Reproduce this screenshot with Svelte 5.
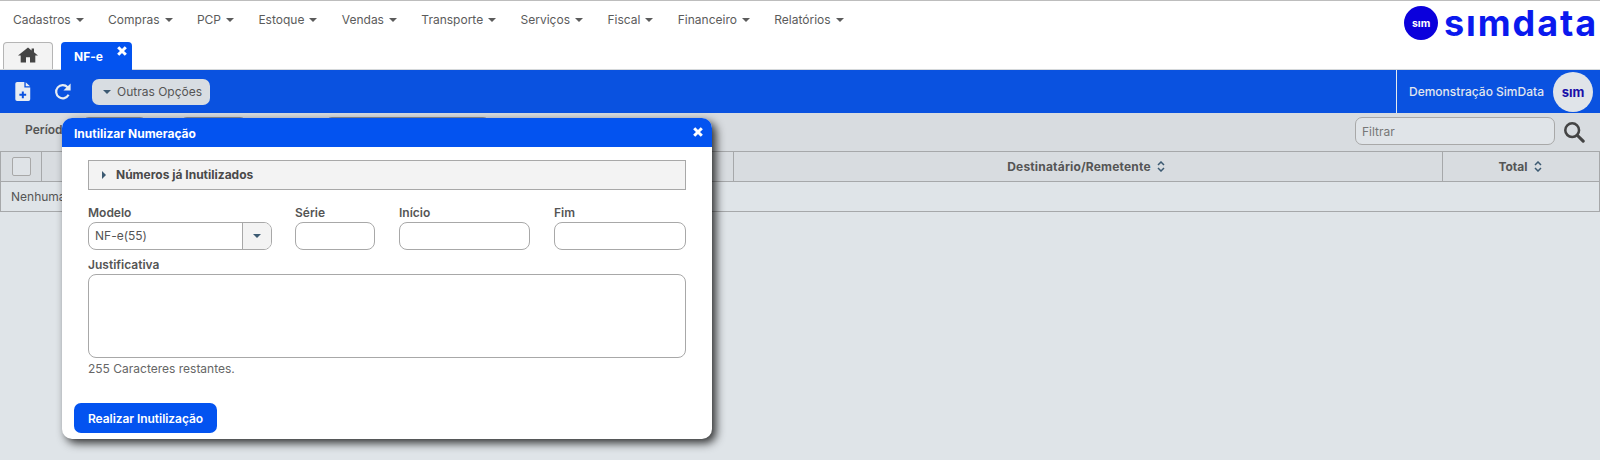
<script>
  const menu = ['Cadastros','Compras','PCP','Estoque','Vendas','Transporte','Serviços','Fiscal','Financeiro','Relatórios'];
</script>

<div class="page">
  <header class="top">
    <nav class="menu">
      {#each menu as m}
        <span class="mi">{m}<i class="caret"></i></span>
      {/each}
    </nav>
    <div class="logo">
      <span class="logo-badge">sım</span>
      <span class="logo-word">sımdata</span>
    </div>
  </header>

  <div class="tabs">
    <div class="tab home">
      <svg width="20" height="16" viewBox="0 0 20 18" preserveAspectRatio="none"><path fill="#444" d="M10 0.5 L13.6 3.8 V1.6 H16 V6 L20 9.6 H17.3 V17.5 H12 V11.5 H8 V17.5 H2.7 V9.6 H0 Z"/></svg>
    </div>
    <div class="tab active">NF-e
      <svg class="tabx" width="10" height="10" viewBox="0 0 10 10"><path stroke="#fff" stroke-width="3" d="M1.2 1.2 L8.8 8.8 M8.8 1.2 L1.2 8.8"/></svg>
    </div>
  </div>

  <div class="bar">
    <button class="ic" aria-label="Novo">
      <svg width="16" height="19" viewBox="0 0 17 21"><path fill="#e8edf3" d="M2 0 H10 V6 H16.5 V19 a2 2 0 0 1-2 2 H2 a2 2 0 0 1-2-2 V2 a2 2 0 0 1 2-2Z M11.5 0.3 L16.3 4.8 H11.5Z"/><path stroke="#0a52e0" stroke-width="2.2" d="M8.3 10.5 V18 M4.5 14.2 H12"/></svg>
    </button>
    <button class="ic ic2" aria-label="Atualizar">
      <svg width="18" height="18" viewBox="0 0 18 18"><path fill="none" stroke="#e8edf3" stroke-width="2.2" d="M14.6 11.8 A6.6 6.6 0 1 1 13.6 4.2"/><path fill="#e8edf3" d="M16.6 0.4 V7.6 H9.4Z"/></svg>
    </button>
    <button class="opts"><i class="caret blue"></i>Outras Opções</button>
    <div class="user">
      <span class="uname">Demonstração SimData</span>
      <span class="avatar">sım</span>
    </div>
  </div>

  <div class="filters">
    <span class="periodo">Período</span>
    <span class="fb b1"></span>
    <span class="fb b2"></span>
    <span class="fb b3"></span>
    <span class="filter"><input class="fin" placeholder="Filtrar" /></span>
    <svg class="search" width="22" height="22" viewBox="0 0 24 24"><circle cx="10" cy="10" r="7.5" fill="none" stroke="#444" stroke-width="2.8"/><path stroke="#444" stroke-width="3.4" stroke-linecap="round" d="M15.8 15.8 L22 22"/></svg>
  </div>

  <div class="table">
    <div class="thead">
      <div class="c chk"><span class="cb"></span></div>
      <div class="c mid"></div>
      <div class="c dest"><span class="dt">Destinatário/Remetente</span><svg class="sort" width="8" height="11" viewBox="0 0 8 11"><path fill="none" stroke="#3c5a72" stroke-width="1.5" d="M1 4 L4 1 L7 4 M1 7 L4 10 L7 7"/></svg></div>
      <div class="c tot">Total<svg class="sort" width="8" height="11" viewBox="0 0 8 11"><path fill="none" stroke="#3c5a72" stroke-width="1.5" d="M1 4 L4 1 L7 4 M1 7 L4 10 L7 7"/></svg></div>
    </div>
    <div class="row">Nenhuma</div>
  </div>

  <section class="dialog">
    <div class="dh"><span class="dtitle">Inutilizar Numeração</span>
      <svg class="dclose" width="10" height="10" viewBox="0 0 10 10"><path stroke="#fff" stroke-width="3" d="M1.2 1.2 L8.8 8.8 M8.8 1.2 L1.2 8.8"/></svg>
    </div>
    <div class="db">
      <div class="acc"><i class="tri"></i>Números já Inutilizados</div>
      <div class="fields">
        <label class="f modelo"><span>Modelo</span>
          <div class="select"><span class="sv">NF-e(55)</span><span class="sb"><i class="caret blue"></i></span></div>
        </label>
        <label class="f serie"><span>Série</span><input class="inp" /></label>
        <label class="f inicio"><span>Início</span><input class="inp" /></label>
        <label class="f fim"><span>Fim</span><input class="inp" /></label>
      </div>
      <label class="f just"><span>Justificativa</span><textarea class="ta"></textarea></label>
      <div class="rem">255 Caracteres restantes.</div>
    </div>
    <button class="go">Realizar Inutilização</button>
  </section>
</div>

<style>
  :global(body){margin:0;background:#dfe4e8;font-family:Inter,"Liberation Sans",sans-serif;}
  .page{position:relative;width:1600px;height:460px;overflow:hidden;color:#555;font-size:12px;}
  button{font-family:inherit;}
  .top{height:40px;box-sizing:border-box;background:#fff;border-top:1px solid #bdbdbd;display:flex;justify-content:space-between;}
  .menu{display:flex;padding:11px 0 0 13px;gap:24.4px;height:16px;}
  .mi{color:#5b5b5b;line-height:16px;white-space:nowrap;}
  .caret{display:inline-block;width:0;height:0;border-left:4px solid transparent;border-right:4px solid transparent;border-top:4px solid #5b5b5b;margin-left:5px;vertical-align:2px;}
  .caret.blue{border-top-color:#3c5a72;margin:0;}
  .logo{display:flex;align-items:center;height:34px;margin:5px 2px 0 0;gap:6px;}
  .logo-badge{width:34px;height:34px;border-radius:50%;background:#0b00dc;color:#fff;font-size:10.5px;font-weight:700;display:flex;align-items:center;justify-content:center;}
  .logo-word{font-size:36px;font-weight:700;color:#0a19ee;line-height:34px;letter-spacing:1.9px;}
  .tabs{height:29px;background:#fff;display:flex;padding-left:3px;gap:8px;align-items:flex-end;}
  .tab{box-sizing:border-box;border-radius:4px 4px 0 0;}
  .home{height:27px;width:50px;background:#f3f3f3;border:1px solid #b5b5b5;border-bottom:0;display:flex;justify-content:center;padding-top:4px;}
  .active{height:28px;margin-bottom:-1px;width:71px;background:#0353f0;color:#fff;font-weight:700;padding:7px 0 0 13px;position:relative;z-index:1;line-height:16px;}
  .tabx{position:absolute;left:56px;top:4px;}
  .bar{height:44px;background:#0a52e0;border-top:1px solid #d5d8da;box-sizing:border-box;display:flex;align-items:center;padding-left:15px;position:relative;}
  .ic{background:none;border:0;padding:0;display:flex;}
  .ic2{margin-left:23px;}
  .opts{margin-left:20px;height:26px;width:118px;border:0;border-radius:7px;background:#d8dde2;color:#555;font-size:12px;display:flex;align-items:center;gap:6px;padding:0 0 0 11px;}
  .user{margin-left:auto;width:204px;flex:none;border-left:1px solid #e6eaee;height:43px;box-sizing:border-box;display:flex;align-items:center;justify-content:space-between;padding:0 7px 0 12px;}
  .uname{color:#e2e7ee;font-weight:500;font-size:12px;white-space:nowrap;}
  .avatar{width:40px;height:40px;flex:none;border-radius:50%;background:#e0e4e9;color:#1a10a8;font-weight:700;font-size:13px;display:flex;align-items:center;justify-content:center;}
  .filters{height:38px;box-sizing:border-box;background:#d8dce0;display:flex;align-items:flex-start;padding:4px 0 0 25px;}
  .periodo{font-weight:600;color:#555;line-height:26px;width:57px;}
  .fb{height:28px;box-sizing:border-box;border:1px solid #8f9498;border-radius:7px;}
  .b1{width:65px;}
  .b2{width:67px;margin-left:33px;}
  .b3{width:165px;margin-left:78px;}
  .filter{margin-left:auto;margin-right:8px;}
  .fin{display:block;box-sizing:border-box;width:200px;height:28px;border:1px solid #a8a8a8;border-radius:7px;background:#e0e4e8;padding:0 6px;font:12px Inter,sans-serif;color:#555;outline:0;}
  .fin::placeholder{color:#777;}
  .search{margin:4px 15px 0 0;flex:none;}
  .thead{display:flex;height:31px;box-sizing:border-box;background:#d8dce0;border:1px solid #a6a8aa;}
  .c{box-sizing:border-box;display:flex;align-items:center;justify-content:center;font-weight:700;color:#555;border-right:1px solid #a6a8aa;gap:6px;}
  .chk{width:41px;}
  .cb{width:17px;height:17px;border:1px solid #a8a8a8;border-radius:2px;background:#dfe3e7;}
  .mid{width:692px;}
  .dest{width:709px;padding-right:4px;}
  .dt{letter-spacing:.18px;}
  .tot{flex:1;border-right:0;padding-right:2px;}
  .row{box-sizing:border-box;height:30px;border:1px solid #a6a8aa;border-top:0;padding:0 0 0 10px;line-height:29px;color:#555;}
  .dialog{position:absolute;left:62px;top:118px;width:650px;height:321px;background:#fff;border-radius:10px;box-shadow:4px 4px 10px rgba(0,0,0,.8);box-sizing:border-box;z-index:2;}
  .dh{height:29px;background:#0353f0;border-radius:10px 10px 0 0;color:#fff;font-weight:700;display:flex;justify-content:space-between;align-items:center;padding:0 9px 0 12px;box-sizing:border-box;}
  .dtitle{margin-top:2px;}
  .dclose{margin-top:-2px;}
  .db{padding:13px 26px 0;}
  .acc{box-sizing:border-box;height:30px;background:#f3f3f3;border:1px solid #a8a8a8;font-weight:700;color:#4a4a4a;display:flex;align-items:center;padding:0 0 1px 13px;gap:10px;}
  .tri{width:0;height:0;border-top:4px solid transparent;border-bottom:4px solid transparent;border-left:4px solid #3c5a72;}
  .fields{display:flex;margin-top:15px;}
  .f{display:flex;flex-direction:column;}
  .f>span{font-weight:600;color:#555;line-height:16px;height:16px;margin-bottom:1px;}
  .modelo{width:184px;}
  .serie{width:80px;margin-left:23px;}
  .inicio{width:131px;margin-left:24px;}
  .fim{width:132px;margin-left:24px;}
  .select{box-sizing:border-box;height:28px;border:1px solid #a8a8a8;border-radius:8px;display:flex;overflow:hidden;}
  .sv{flex:1;padding:0 6px;line-height:26px;color:#555;}
  .sb{width:28px;border-left:1px solid #a8a8a8;background:#f3f3f3;display:flex;align-items:center;justify-content:center;}
  .inp{box-sizing:border-box;height:28px;width:100%;border:1px solid #a8a8a8;border-radius:8px;background:#fff;outline:0;}
  .just{margin-top:7px;}
  .ta{box-sizing:border-box;width:598px;height:84px;border:1px solid #a8a8a8;border-radius:8px;resize:none;outline:0;display:block;}
  .rem{margin-top:3px;line-height:16px;color:#666;}
  .go{position:absolute;left:12px;top:285px;width:143px;height:30px;border:0;border-radius:7px;background:#0353f0;color:#fff;font-weight:600;font-size:12px;letter-spacing:-.05px;}
</style>
